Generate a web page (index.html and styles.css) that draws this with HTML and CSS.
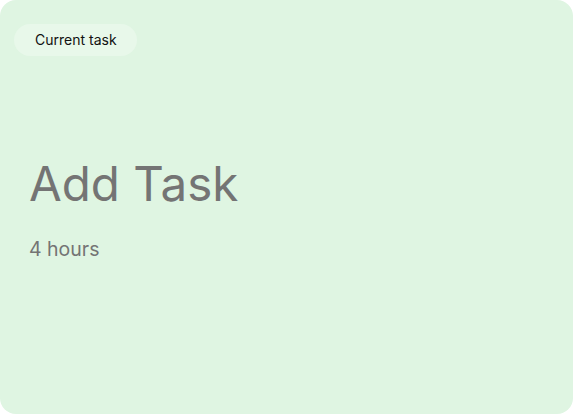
FILE: index.html
```html
<!DOCTYPE html>
<html>
<head>
<meta charset="utf-8">
<link rel="stylesheet" href="styles.css">
</head>
<body>
<div class="card">
  <div class="pill">Current task</div>
  <div class="content">
    <h1 class="title">Add Task</h1>
    <p class="duration">4 hours</p>
  </div>
</div>
</body>
</html>
```
FILE: styles.css
```css
html, body {
  margin: 0;
  padding: 0;
  background: #ffffff;
  font-family: Inter, "Noto Sans", sans-serif;
}
.card {
  box-sizing: border-box;
  width: 573px;
  height: 414px;
  background: #dff5e2;
  border-radius: 16px;
  padding: 24px 14px;
  display: flex;
  flex-direction: column;
  align-items: flex-start;
}
.pill {
  background: #e8f8ea;
  border-radius: 16px;
  height: 32px;
  line-height: 32px;
  padding: 0 20px 0 21px;
  font-size: 14px;
  color: #111;
}
.content {
  padding-left: 15px;
  padding-top: 99px;
}
.title {
  margin: 0;
  font-size: 47.5px;
  font-weight: 400;
  line-height: 58px;
  color: #747474;
}
.duration {
  margin: 24px 0 0 0;
  font-size: 19.5px;
  line-height: 24px;
  color: #747474;
}
```
